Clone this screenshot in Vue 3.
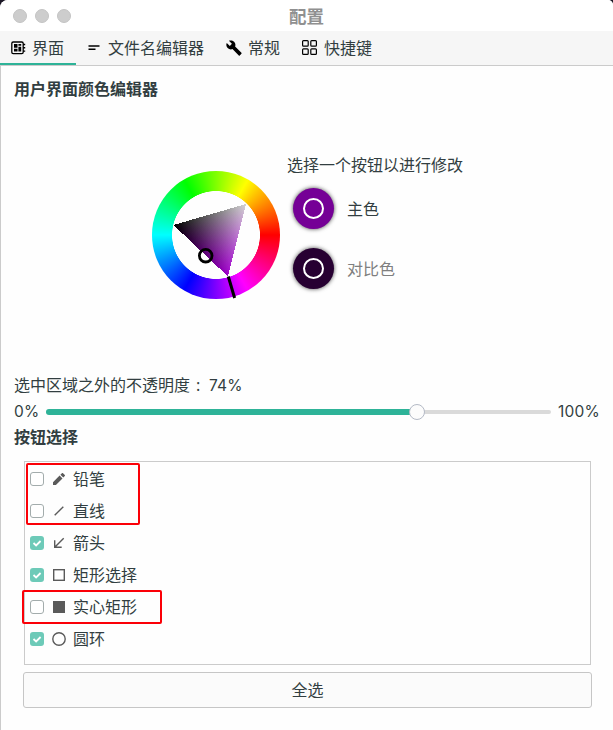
<script setup>
import { ref, computed } from 'vue'

const tabs = [
  { id: 'ui', label: '界面' },
  { id: 'file', label: '文件名编辑器' },
  { id: 'general', label: '常规' },
  { id: 'keys', label: '快捷键' },
]
const active = ref('ui')
const opacity = ref(74)
const fillWidth = computed(() => opacity.value - 0.5 + '%')

const tools = ref([
  { id: 'pencil', label: '铅笔', on: false },
  { id: 'line', label: '直线', on: false },
  { id: 'arrow', label: '箭头', on: true },
  { id: 'rect', label: '矩形选择', on: true },
  { id: 'solid', label: '实心矩形', on: false },
  { id: 'circle', label: '圆环', on: true },
])
const selectAll = () => tools.value.forEach((t) => (t.on = true))
</script>

<template>
  <div class="desktop">
    <div class="window">
      <header class="titlebar">
        <div class="lights"><i></i><i></i><i></i></div>
        <span class="title">配置</span>
      </header>
      <nav class="tabs">
        <div v-for="t in tabs" :key="t.id" class="tab" :class="[t.id, { active: active === t.id }]" @click="active = t.id">
          <svg v-if="t.id === 'ui'" width="15" height="14" viewBox="0 0 15 14">
            <rect x=".8" y="1" width="11.4" height="11.6" rx="1.4" fill="none" stroke="#000" stroke-width="1.3" />
            <path d="M12 3.5h2.2M12 6.8h2.2M12 10.1h2.2" stroke="#000" stroke-width="1.4" />
            <path d="M3 3h3.5v3.7H3zM7.4 3h2.8v1.8H7.4zM7.4 5.8h2.8v4.8H7.4zM3 7.8h3.5v2.8H3z" fill="#000" />
          </svg>
          <svg v-else-if="t.id === 'file'" width="12" height="6" viewBox="0 0 12 6">
            <path d="M0.5 1h11M0.5 4.2h7" stroke="#000" stroke-width="1.5" />
          </svg>
          <svg v-else-if="t.id === 'general'" width="16" height="16" viewBox="0.5 1 23 22">
            <path d="M22.7 19l-9.1-9.1c.9-2.3.4-5-1.5-6.9-2-2-5-2.4-7.4-1.3L9 6 6 9 1.6 4.7C.4 7.1.9 10.1 2.9 12.1c1.9 1.9 4.6 2.4 6.9 1.5l9.1 9.1c.4.4 1 .4 1.4 0l2.3-2.3c.5-.4.5-1.1.1-1.4z" />
          </svg>
          <svg v-else class="grid-icon" width="15" height="15" viewBox="0 0 15 15" fill="none" stroke="#000" stroke-width="1.2">
            <rect x=".6" y=".6" width="5.6" height="5.6" rx=".9" />
            <rect x="8.8" y=".6" width="5.6" height="5.6" rx=".9" />
            <rect x=".6" y="8.8" width="5.6" height="5.6" rx=".9" />
            <rect x="8.8" y="8.8" width="5.6" height="5.6" rx=".9" />
          </svg>
          <span>{{ t.label }}</span>
        </div>
      </nav>

      <main class="page">
        <h2>用户界面颜色编辑器</h2>
        <section class="editor">
          <div class="wheel">
            <svg class="tri" width="128" height="130" viewBox="0 0 128 130">
              <defs>
                <linearGradient id="hue" gradientUnits="userSpaceOnUse" x1="57.75" y1="43.5" x2="76" y2="105">
                  <stop offset="0" stop-color="#000" /><stop offset="1" stop-color="#a000cc" />
                </linearGradient>
                <linearGradient id="white" gradientUnits="userSpaceOnUse" x1="49" y1="79.5" x2="93.5" y2="33">
                  <stop offset="0" stop-color="#000" /><stop offset="1" stop-color="#d2d2d2" />
                </linearGradient>
              </defs>
              <g class="blend" shape-rendering="crispEdges">
                <polygon points="21.5,54 94,33 76,105.5" fill="url(#hue)" />
                <polygon class="add" points="21.5,54 94,33 76,105.5" fill="url(#white)" />
              </g>
              <path d="M76.3 105.5L82.6 127" stroke="#000" stroke-width="3" />
              <circle cx="53.7" cy="84.7" r="6.3" fill="none" stroke="#000" stroke-width="2.8" />
            </svg>
          </div>
          <div class="choices">
            <p>选择一个按钮以进行修改</p>
            <div class="choice main"><b class="swatch"><i></i></b><span>主色</span></div>
            <div class="choice contrast"><b class="swatch"><i></i></b><span>对比色</span></div>
          </div>
        </section>

        <p class="opacity">选中区域之外的不透明度<span class="colon">:</span><span class="num">{{ opacity }}%</span></p>
        <div class="slider">
          <span class="num">0%</span>
          <div class="track">
            <div class="fill" :style="{ width: fillWidth }"><i class="knob"></i></div>
          </div>
          <span class="num max">100%</span>
        </div>
        <h2>按钮选择</h2>
        <div class="list">
          <div v-for="t in tools" :key="t.id" class="item" @click="t.on = !t.on">
            <span class="check" :class="{ on: t.on }">
              <svg v-if="t.on" width="14" height="14" viewBox="0 0 14 14"><path d="M3.5 7l2.6 2.5L10.6 5" fill="none" stroke="#fff" stroke-width="1.8" /></svg>
            </span>
            <svg class="glyph" width="16" height="16" viewBox="0 0 16 16" fill="none" stroke="#5a5a5a" stroke-width="1.4">
              <path v-if="t.id === 'pencil'" d="M2 11.2V14h2.9l6.6-6.6-2.9-2.9zM9.4 3.7l2.9 2.9 1.5-1.5c.3-.3.3-.8 0-1.1l-1.8-1.8c-.3-.3-.8-.3-1.1 0z" fill="#5a5a5a" stroke="none" />
              <path v-else-if="t.id === 'line'" d="M3.7 12.3l8.6-8.6" />
              <path v-else-if="t.id === 'arrow'" d="M12.7 3.3L4 12M3.7 5.3v7h7" />
              <rect v-else-if="t.id === 'rect'" x="2.7" y="2.7" width="10.6" height="10.6" />
              <rect v-else-if="t.id === 'solid'" x="2" y="2" width="12" height="12" fill="#5a5a5a" stroke="none" />
              <circle v-else cx="8" cy="8" r="6.2" />
            </svg>
            <span>{{ t.label }}</span>
          </div>
          <div class="mark mark-a"></div>
          <div class="mark mark-b"></div>
        </div>
        <button class="all" @click="selectAll">全选</button>
      </main>
    </div>
  </div>
</template>

<style>
body { margin: 0; background: #fff; }
</style>

<style scoped>
* { box-sizing: border-box; }
.desktop { width: 613px; height: 730px; background: linear-gradient(#1c1826 0 20px, #fff 20px); overflow: hidden; }
.window { height: 730px; display: flex; flex-direction: column; background: #fefefe; border-radius: 8px 5px 0 0; overflow: hidden; font: 16px/24px "Noto Sans", "Noto Sans CJK SC", sans-serif; color: #323e41; }
.titlebar { height: 31px; display: grid; grid-template-columns: 1fr auto 1fr; align-items: center; flex: none; background: #fff; }
.lights { display: flex; gap: 8px; padding-left: 13px; }
.lights i { width: 14px; height: 14px; border-radius: 50%; background: #cdcdcd; border: 1px solid #c4c4c4; }
.title { font-size: 17.5px; font-weight: 700; font-family: "Noto Sans CJK SC", sans-serif; color: #909090; }
.tabs { height: 35px; flex: none; display: flex; background: #f6f6f6; border-bottom: 1px solid #cbcbcb; }
.tab { height: 34px; display: flex; align-items: center; gap: 7px; padding: 0 12px 0 10px; }
.tab.ui { padding-left: 11px; gap: 6px; }
.tab.file { gap: 8px; padding-left: 12px; }
.tab.general { padding-left: 10px; gap: 6px; }
.tab.active { border-bottom: 2px solid #2eb398; padding-top: 2px; }
.grid-icon { margin-bottom: 1px; }
.page { flex: 1; display: flex; flex-direction: column; border-left: 1px solid #cbcbcb; padding: 11px 13px 0; }
h2, p { margin: 0; }
h2 { font-size: 16px; line-height: 24px; font-weight: 700; }
.editor { height: 272px; display: flex; padding: 52px 0 0 138px; gap: 7px; }
.wheel { width: 128px; height: 128px; margin-top: 18px; border-radius: 50%; background: radial-gradient(circle, #fefefe 43.6px, transparent 44.2px), conic-gradient(from 90deg, #f00, #f0f, #00f, #0ff, #0f0, #ff0, #f00); }
.tri { display: block; overflow: visible; }
.blend { isolation: isolate; }
.add { mix-blend-mode: plus-lighter; }
.choices { display: flex; flex-direction: column; }
.choice { height: 60px; display: flex; align-items: center; gap: 13px; padding-left: 6px; }
.choice.main { margin-top: 2px; }
.swatch { width: 41px; height: 41px; margin-bottom: 2px; border-radius: 50%; background: #750096; box-shadow: 0 0 4px #000b; display: grid; place-items: center; }
.swatch i { width: 21px; height: 21px; border: 2px solid #fff; border-radius: 50%; }
.contrast .swatch { background: #270032; }
.contrast span { color: #7f7f7f; }
.opacity { height: 24px; }
.num { font-family: Inter, "Noto Sans", sans-serif; font-size: 15.5px; letter-spacing: .2px; }
.colon { display: inline-block; width: 19px; padding-left: 6px; }
.slider { height: 27px; margin-top: 1px; margin-bottom: 0; display: flex; align-items: center; }
.track { flex: 1; height: 4px; border-radius: 2px; background: #dadada; display: flex; align-items: center; }
.slider .num { width: 32px; }
.slider .num.max { width: 49px; padding-left: 7px; }
.fill { height: 6px; border-radius: 3px; background: #2eb398; position: relative; }
.knob { position: absolute; right: -8px; top: -5px; width: 16px; height: 16px; border: 1px solid #b4bac6; border-radius: 50%; background: #fcfcfc; }
.list { position: relative; height: 204px; margin: 12px 9px 0 10px; border: 1px solid #cbcbcb; padding: 1px 5px; }
.item { height: 32px; display: flex; align-items: center; }
.check { width: 14px; height: 14px; border: 1px solid #a3acac; border-radius: 3px; background: #fff; margin-right: 7px; display: flex; }
.check.on { border: 0; background: #6dcab8; }
.glyph { margin-right: 6px; }
.mark { position: absolute; border: 2px solid #fb0007; border-radius: 2px; }
.mark-a { left: 1px; top: 1px; width: 114px; height: 62px; }
.mark-b { left: -3px; top: 128px; width: 140px; height: 34px; }
.all { height: 36px; flex: none; margin: 7px 8px 0 9px; border: 1px solid #c6c6c6; border-radius: 3px; background: #fbfbfb; font: inherit; color: inherit; padding: 0; }
</style>
